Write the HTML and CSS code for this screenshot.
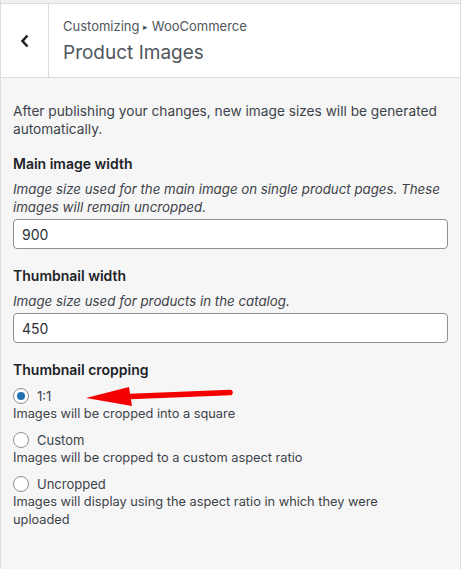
FILE: index.html
```html
<!DOCTYPE html>
<html>
<head>
<meta charset="utf-8" />
<title>Product Images</title>
<meta name="viewport" content="width=device-width, initial-scale=1.0"/>
<link rel="stylesheet" href="styles.css">
</head>
<body>
<div class="panel">
  <div class="topbar"></div>
  <header class="head">
    <button class="back" type="button" aria-label="Back">
      <svg width="10" height="14" viewBox="0 0 10 14"><path d="M7.5 1.5 L2.5 7 L7.5 12.5" fill="none" stroke="#1d2327" stroke-width="2.6"/></svg>
    </button>
    <div class="titles">
      <span class="crumb">Customizing <span class="sep">&#9656;</span> WooCommerce</span>
      <h2 class="title">Product Images</h2>
    </div>
  </header>

  <section class="content">
    <p class="notice">After publishing your changes, new image sizes will be generated automatically.</p>

    <div class="control">
      <label class="label" for="main">Main image width</label>
      <p class="desc">Image size used for the main image on single product pages. These images will remain uncropped.</p>
      <input class="field" type="number" id="main" value="900">
    </div>

    <div class="control">
      <label class="label" for="thumb">Thumbnail width</label>
      <p class="desc">Image size used for products in the catalog.</p>
      <input class="field" type="number" id="thumb" value="450">
    </div>

    <div class="control crop">
      <span class="label">Thumbnail cropping</span>
      <div class="option">
        <label class="radio"><input type="radio" name="crop" checked> <span>1:1</span></label>
        <p class="help">Images will be cropped into a square</p>
        <svg class="arrow" width="150" height="26" viewBox="0 0 150 26">
          <path d="M44 13.5 L144 9.5" stroke="#f40000" stroke-width="5.5" stroke-linecap="round"/>
          <polygon points="0,15 43,4 46,23" fill="#f40000"/>
        </svg>
      </div>
      <div class="option">
        <label class="radio"><input type="radio" name="crop"> <span>Custom</span></label>
        <p class="help">Images will be cropped to a custom aspect ratio</p>
      </div>
      <div class="option">
        <label class="radio"><input type="radio" name="crop"> <span>Uncropped</span></label>
        <p class="help">Images will display using the aspect ratio in which they were uploaded</p>
      </div>
    </div>
  </section>
</div>
</body>
</html>
```

FILE: styles.css
```css
:root {
	--bord : #dcdcde;
	--texte : #3c434a;
	--fond : #f6f6f6;
}
body {
	margin : 0;
	background : #fff;
	font-family : "Inter", "Liberation Sans", sans-serif;
	font-size : 13px;
	color : var(--texte);
}
.panel {
	width : 459px;
	min-height : 569px;
	background : var(--fond);
	border-left : 1px solid var(--bord);
	border-right : 1px solid var(--bord);
}
.topbar {
	height : 3px;
	background : #f0f0f1;
	border-bottom : 1px solid var(--bord);
}
.head {
	display : flex;
	height : 73px;
	background : #fff;
	border-bottom : 1px solid var(--bord);
}
.back {
	width : 48px;
	border : 0;
	border-right : 1px solid var(--bord);
	background : #fff;
	padding : 0;
	display : flex;
	align-items : center;
	justify-content : center;
}
.titles {
	display : flex;
	flex-direction : column;
	padding : 14px 0 0 14px;
}
.crumb {
	font-size : 13px;
	line-height : 16px;
	color : #50575e;
}
.sep { font-size : 9px; vertical-align : 1px; }
.title {
	margin : 6px 0 0;
	font-size : 19px;
	font-weight : 400;
	line-height : 24px;
	color : #50575e;
}
.content { padding : 24px 12px 40px; }
.notice { margin : 0 0 16px; line-height : 18px; font-size : 13.7px; }
.control { margin-bottom : 17px; }
.label {
	display : block;
	font-size : 14px;
	font-weight : 600;
	color : #1d2327;
	line-height : 20px;
	margin-bottom : 6px;
}
.desc {
	margin : 0 0 3px;
	font-style : italic;
	font-size : 13.3px;
	line-height : 18px;
}
.field {
	display : block;
	width : 100%;
	box-sizing : border-box;
	height : 30px;
	border : 1px solid #8c8f94;
	border-radius : 4px;
	padding : 0 8px;
	font : inherit;
	font-size : 14px;
	color : #2c3338;
	background : #fff;
	-moz-appearance : textfield;
}
.field::-webkit-inner-spin-button { -webkit-appearance : none; }
.crop .label { margin-bottom : 7px; }
.option { position : relative; margin-bottom : 8px; }
.radio {
	display : flex;
	align-items : center;
	gap : 5px;
	line-height : 18px;
	font-size : 13px;
}
.radio input {
	-webkit-appearance : none;
	appearance : none;
	margin : 0 3px 0 0;
	width : 16px;
	height : 16px;
	border : 1px solid #8c8f94;
	border-radius : 50%;
	background : #fff;
	display : grid;
	place-content : center;
}
.radio input:checked::before {
	content : "";
	width : 8px;
	height : 8px;
	border-radius : 50%;
	background : #2271b1;
}
.help { margin : 0; line-height : 18px; font-size : 12.8px; max-width : 390px; }
.arrow { position : absolute; left : 73px; top : -4px; }
```
